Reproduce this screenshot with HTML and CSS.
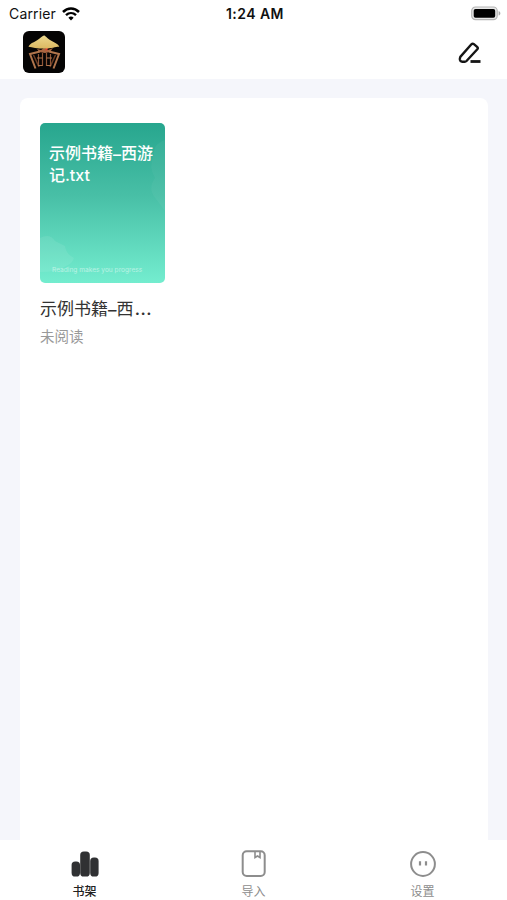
FILE: index.html
```
<!DOCTYPE html>
<html lang="zh-CN">
<head>
    <meta charset="UTF-8">
    <meta name="viewport" content="width=device-width, initial-scale=1.0">
    <title>书架</title>
    <link rel="stylesheet" href="styles.css">
</head>
<body>
    <div class="app">
        <div class="status-bar">
            <div class="carrier">
                <span>Carrier</span>
                <svg width="18" height="14" viewBox="0 0 18 14" fill="none" stroke="#000">
                    <path d="M1 5C5.600.400 12.400.400 17 5" stroke-width="2.500"/>
                    <path d="M4 8.200c2.900-2.800 7.100-2.800 10 0" stroke-width="2.400"/>
                    <path d="M6.400 10.700c1.500-1.500 3.700-1.500 5.200 0L9 13.400z" fill="#000" stroke="none"/>
                </svg>
            </div>
            <div class="time">1:24 AM</div>
            <div class="battery">
                <svg width="31" height="15" viewBox="0 0 31 15">
                    <rect x="1.700" y="1" width="25.500" height="12.600" rx="3.800" fill="#e8e8e8" stroke="#b5b5b5" stroke-width="1.200"/>
                    <rect x="3.700" y="2.900" width="21.500" height="8.800" rx="1.800" fill="#000"/>
                    <path d="M28.600 5c2.400 1 2.400 3.600 0 4.600z" fill="#aaa"/>
                </svg>
            </div>
        </div>

        <header class="header">
            <svg class="logo" width="42" height="42" viewBox="0 0 42 42">
                <defs>
                    <linearGradient id="hat" x1="0" y1="0" x2="0" y2="1">
                        <stop offset="0" stop-color="#ecd88e"/>
                        <stop offset="1" stop-color="#dcb861"/>
                    </linearGradient>
                </defs>
                <rect width="42" height="42" rx="6" fill="#050404"/>
                <path d="M14 18l4 1 3-2 4 2 5-2-3 4-5 1-6-1z" fill="#a86540"/>
                <path d="M22 16.500l3.500 1-2.500 2.500z" fill="#e23a2e"/>
                <g fill="none" stroke="#b0754c">
                    <path d="M17 20.500L7 23l5.500 14.500M26 20.500L36 23l-5.500 14.500" stroke-width="2"/>
                    <path d="M10.500 24l5.500 12M32.500 24L27 36" stroke="#6d3d24" stroke-width="1.500"/>
                    <path d="M15.500 23v12M19.500 22v13M23.500 22v13M27.500 23v12" stroke="#8f5638" stroke-width="1.200"/>
                    <path d="M14 27h5.500M23.500 27H29M15 34.500h4.500M23.500 34.500H28" stroke-width="1.200"/>
                </g>
                <path d="M21 4.500c1.300 0 3 2.700 6 4.500 3.500 2.200 7.800 3.500 9.300 6.700-3.600-.2-7 1.800-15.300 1.800-7 0-11.600-1-15.500-1.800C7 12 11.500 11.300 14.500 9c3-2 5.200-4.500 6.500-4.500z" fill="url(#hat)"/>
            </svg>
            <svg class="edit" width="24" height="24" viewBox="0 0 24 24" fill="none" stroke="#151515" stroke-width="2.400">
                <path d="M2.300 15.900L13.400 3.300q1.200-1.200 2.500-.1l3.200 2.600q1.300 1.200.2 2.500L8.500 20q-.7.700-1.700.7H4.200q-2-.2-2.300-2-.2-1.500.4-2.800z"/>
                <path d="M12.500 20.500H22.500" stroke-width="2.800"/>
            </svg>
        </header>

        <main class="content">
            <div class="shelf">
                <div class="book">
                    <div class="cover">
                        <svg class="cover-art" width="125" height="160" viewBox="0 0 125 160" fill="#fff">
                            <path d="M125 17q-12 4-11 14-6 13 1 24-8 11 1 21l9 12z" fill-opacity=".04"/>
                            <path d="M0 115q10-5 15 3l10 5q1 8 9 12-2 6-8 8-8 6-26 6z" fill-opacity=".08"/>
                        </svg>
                        <div class="cover-title">示例书籍<span class="dash">–</span>西游<br>记.txt</div>
                        <div class="cover-slogan">Reading makes you progress</div>
                    </div>
                    <div class="book-name">示例书籍<span class="dash">–</span>西<span class="dots">…</span></div>
                    <div class="book-status">未阅读</div>
                </div>
            </div>
        </main>

        <nav class="tab-bar">
            <div class="tab active">
                <svg width="28" height="28" viewBox="0 0 28 28" fill="#303133">
                    <rect x=".6" y="11.500" width="8.400" height="15" rx="3.600"/>
                    <rect x="9.200" y="1.500" width="9.600" height="25" rx="3.600"/>
                    <rect x="19.200" y="7.500" width="8.400" height="19" rx="3.600"/>
                </svg>
                <span>书架</span>
            </div>
            <div class="tab">
                <svg width="28" height="28" viewBox="0 0 28 28" fill="none" stroke="#8d8d8d">
                    <rect x="2.700" y="1.200" width="22" height="24.800" rx="4" stroke-width="2"/>
                    <path d="M15 1.500v6l2.500-1.500L20 7.500v-6" stroke-width="1.600"/>
                </svg>
                <span>导入</span>
            </div>
            <div class="tab">
                <svg width="28" height="28" viewBox="0 0 28 28" fill="none" stroke="#8d8d8d">
                    <circle cx="14" cy="14" r="11.900" stroke-width="2"/>
                    <path d="M11 11.300v4.200M17 11.300v4.200" stroke-width="2.200"/>
                </svg>
                <span>设置</span>
            </div>
        </nav>
    </div>
</body>
</html>
```
FILE: styles.css
```
* {
    box-sizing: border-box;
}
body {
    margin: 0;
    font-family: Inter, "Noto Sans CJK SC", sans-serif;
    background: #fff;
}
.app {
    height: 900px;
    display: flex;
    flex-direction: column;
}
.status-bar {
    height: 27px;
    padding: 0 6px 0 9px;
    display: grid;
    grid-template-columns: 1fr auto 1fr;
    align-items: center;
    font-size: 14px;
    color: #111;
}
.carrier {
    display: flex;
    align-items: center;
    gap: 6px;
    letter-spacing: 0.15px;
}
.time {
    font-weight: 600;
    letter-spacing: 0.45px;
}
.battery {
    display: flex;
    justify-content: flex-end;
}
.header {
    height: 52px;
    padding: 4px 25px 0 23px;
    display: flex;
    justify-content: space-between;
    align-items: flex-start;
}
.edit {
    margin-top: 10px;
}
.content {
    flex: 1;
    padding: 19px 19px 0 20px;
    background: #f5f6fb;
}
.shelf {
    height: 100%;
    padding: 25px 20px 0;
    background: #fff;
    border-radius: 8px 8px 0 0;
}
.book {
    width: 125px;
}
.cover {
    position: relative;
    height: 160px;
    padding: 19px 0 0 9px;
    border-radius: 5px;
    overflow: hidden;
    background: linear-gradient(#27a68e, #48bfa6 45%, #74edcf);
    color: #fff;
}
.cover-art {
    position: absolute;
    top: 0;
    left: 0;
}
.cover-title {
    font-size: 16px;
    line-height: 22px;
    font-weight: 500;
    white-space: nowrap;
}
.dash {
    display: inline-block;
    transform: translateY(1px);
}
.cover-slogan {
    position: absolute;
    left: 12px;
    bottom: 9px;
    font-size: 6.6px;
    line-height: 8px;
    white-space: nowrap;
    opacity: 0.5;
}
.book-name {
    margin-top: 14px;
    font-size: 17px;
    line-height: 24px;
    color: #333;
    white-space: nowrap;
}
.dots {
    margin-left: 1px;
    letter-spacing: 0;
    font-size: 20px;
    line-height: 1;
}
.book-status {
    margin-top: 6px;
    font-size: 14.5px;
    line-height: 20px;
    color: #999;
}
.tab-bar {
    height: 60px;
    display: flex;
    background: #fff;
}
.tab {
    flex: 1;
    padding-top: 10px;
    display: flex;
    flex-direction: column;
    align-items: center;
    gap: 5px;
    font-size: 12px;
    line-height: 17px;
    color: #8d8d8d;
}
.tab.active {
    color: #222;
    font-weight: 500;
}
```
